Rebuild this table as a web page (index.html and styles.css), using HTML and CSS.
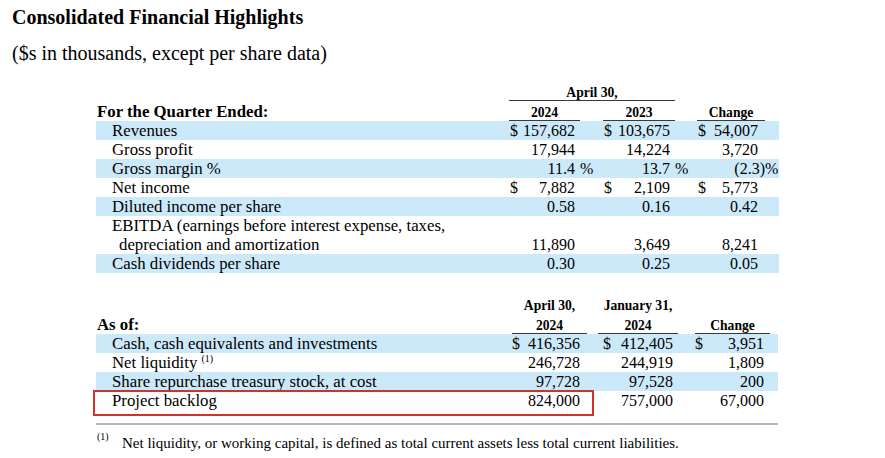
FILE: index.html
```html
<!DOCTYPE html>
<html lang="en">
<head>
<meta charset="utf-8">
<title>Consolidated Financial Highlights</title>
<link rel="stylesheet" href="styles.css">
</head>
<body>
<div class="page">
  <h1 class="title">Consolidated Financial Highlights</h1>
  <p class="subtitle">($s in thousands, except per share data)</p>

  <div class="fin fin-q">
    <div class="row head1">
      <span class="hcell span-12">April 30,</span>
    </div>
    <div class="row head2">
      <span class="lbl section">For the Quarter Ended:</span>
      <span class="hcell ul">2024</span>
      <span></span>
      <span class="hcell ul">2023</span>
      <span></span>
      <span class="hcell ul">Change</span>
      <span></span>
    </div>
    <div class="row band">
      <span class="lbl">Revenues</span>
      <span class="v"><span>$</span><span>157,682</span></span><span class="s"></span>
      <span class="v"><span>$</span><span>103,675</span></span><span class="s"></span>
      <span class="v v3"><span>$</span><span>54,007</span></span><span class="s"></span>
    </div>
    <div class="row">
      <span class="lbl">Gross profit</span>
      <span class="v"><span></span><span>17,944</span></span><span class="s"></span>
      <span class="v"><span></span><span>14,224</span></span><span class="s"></span>
      <span class="v v3"><span></span><span>3,720</span></span><span class="s"></span>
    </div>
    <div class="row band">
      <span class="lbl">Gross margin %</span>
      <span class="v"><span></span><span>11.4</span></span><span class="s">%</span>
      <span class="v"><span></span><span>13.7</span></span><span class="s">%</span>
      <span class="v v3"><span></span><span>(2.3<span class="paren">)</span></span></span><span class="s">%</span>
    </div>
    <div class="row">
      <span class="lbl">Net income</span>
      <span class="v"><span>$</span><span>7,882</span></span><span class="s"></span>
      <span class="v"><span>$</span><span>2,109</span></span><span class="s"></span>
      <span class="v v3"><span>$</span><span>5,773</span></span><span class="s"></span>
    </div>
    <div class="row band">
      <span class="lbl">Diluted income per share</span>
      <span class="v"><span></span><span>0.58</span></span><span class="s"></span>
      <span class="v"><span></span><span>0.16</span></span><span class="s"></span>
      <span class="v v3"><span></span><span>0.42</span></span><span class="s"></span>
    </div>
    <div class="row tall">
      <span class="lbl wrap">EBITDA (earnings before interest expense, taxes,<br>depreciation and amortization</span>
      <span class="v"><span></span><span>11,890</span></span><span class="s"></span>
      <span class="v"><span></span><span>3,649</span></span><span class="s"></span>
      <span class="v v3"><span></span><span>8,241</span></span><span class="s"></span>
    </div>
    <div class="row band">
      <span class="lbl">Cash dividends per share</span>
      <span class="v"><span></span><span>0.30</span></span><span class="s"></span>
      <span class="v"><span></span><span>0.25</span></span><span class="s"></span>
      <span class="v v3"><span></span><span>0.05</span></span><span class="s"></span>
    </div>
  </div>

  <div class="fin fin-b">
    <div class="row head1">
      <span></span>
      <span class="hcell">April 30,</span>
      <span></span>
      <span class="hcell">January 31,</span>
      <span></span>
      <span></span>
      <span></span>
    </div>
    <div class="row head2">
      <span class="lbl section">As of:</span>
      <span class="hcell ul">2024</span>
      <span></span>
      <span class="hcell ul">2024</span>
      <span></span>
      <span class="hcell ul">Change</span>
      <span></span>
    </div>
    <div class="row band">
      <span class="lbl">Cash, cash equivalents and investments</span>
      <span class="v b1"><span>$</span><span>416,356</span></span><span class="s"></span>
      <span class="v b2"><span>$</span><span>412,405</span></span><span class="s"></span>
      <span class="v b3"><span>$</span><span>3,951</span></span><span class="s"></span>
    </div>
    <div class="row">
      <span class="lbl">Net liquidity <sup class="note">(1)</sup></span>
      <span class="v b1"><span></span><span>246,728</span></span><span class="s"></span>
      <span class="v b2"><span></span><span>244,919</span></span><span class="s"></span>
      <span class="v b3"><span></span><span>1,809</span></span><span class="s"></span>
    </div>
    <div class="row band">
      <span class="lbl">Share repurchase treasury stock, at cost</span>
      <span class="v b1"><span></span><span>97,728</span></span><span class="s"></span>
      <span class="v b2"><span></span><span>97,528</span></span><span class="s"></span>
      <span class="v b3"><span></span><span>200</span></span><span class="s"></span>
    </div>
    <div class="row highlight">
      <span class="lbl">Project backlog</span>
      <span class="v b1"><span></span><span>824,000</span></span><span class="s"></span>
      <span class="v b2"><span></span><span>757,000</span></span><span class="s"></span>
      <span class="v b3"><span></span><span>67,000</span></span><span class="s"></span>
      <span class="mark" aria-hidden="true"></span>
    </div>
  </div>

  <div class="footnote">
    <sup class="fn-mark">(1)</sup>
    <span class="fn-text">Net liquidity, or working capital, is defined as total current assets less total current liabilities.</span>
  </div>
</div>
</body>
</html>
```

FILE: styles.css
```css
html, body {
  margin: 0;
  padding: 0;
  background: #ffffff;
}

body {
  font-family: "Liberation Serif", "Times New Roman", serif;
  color: #000;
}

.page {
  padding: 5px 0 0 12px;
}

.title {
  margin: 0;
  font-size: 20px;
  line-height: 24px;
  font-weight: bold;
}

.subtitle {
  margin: 12px 0 0;
  font-size: 20px;
  line-height: 24px;
}

.fin {
  margin-left: 84px;
  font-size: 16px;
}

.fin-q {
  width: 683px;
  margin-top: 20px;
}

.fin-b {
  width: 682px;
  margin-top: 25px;
}

.row {
  display: grid;
  line-height: 19px;
  height: 19px;
  align-items: end;
}

.fin-q .row {
  grid-template-columns: 413px 71px 23px 72px 22px 68px 14px;
}

.fin-b .row {
  grid-template-columns: 416px 75px 11px 80px 17px 75px 8px;
}

.band {
  background: #cce9f9;
}

.row.tall {
  height: 38px;
}

.lbl {
  padding-left: 16px;
  font-size: 16.8px;
  white-space: nowrap;
}

.lbl.section {
  padding-left: 1px;
  font-weight: bold;
}

.lbl.wrap {
  padding-left: 23px;
  text-indent: -7px;
}

.head1 {
  height: 15px;
  line-height: 15px;
}

.hcell {
  font-size: 13.6px;
  font-weight: bold;
  line-height: 15px;
  text-align: center;
  white-space: nowrap;
}

.span-12 {
  grid-column: 2 / 5;
  border-bottom: 1px solid #3a3a3a;
  height: 15px;
}

.fin-q .head1 {
  height: 16px;
}

.ul {
  border-bottom: 1px solid #3a3a3a;
}

.fin-q .head2 {
  height: 20px;
}

.fin-b .head1 {
  height: 15px;
}

.fin-b .head2 {
  height: 21px;
}

.v {
  display: flex;
  justify-content: space-between;
  padding: 0 5px 0 1px;
  white-space: nowrap;
}

.fin-q .v3 {
  padding-right: 7px;
}

.paren {
  margin-right: -7px;
}

.s {
  white-space: nowrap;
}

.fin-b .b1 {
  padding: 0 7px 0 0;
}

.fin-b .b2 {
  padding: 0 5px 0 5px;
}

.fin-b .b3 {
  padding: 0 6px 0 0;
}

.note {
  font-size: 10px;
  line-height: 0;
  vertical-align: 6px;
}

.highlight {
  position: relative;
}

.mark {
  position: absolute;
  left: -3px;
  top: -1px;
  width: 501px;
  height: 26px;
  box-sizing: border-box;
  border: 2px solid #d2302c;
}

.footnote {
  margin: 13px 0 0 84px;
  width: 682px;
  border-top: 2px solid #b9b9b9;
  padding-top: 9px;
  display: flex;
  align-items: flex-start;
  font-size: 15px;
  line-height: 18px;
}

.fn-mark {
  flex: 0 0 25px;
  padding-left: 1px;
  margin-top: -3px;
  font-size: 10px;
  line-height: 12px;
  vertical-align: baseline;
}
```
